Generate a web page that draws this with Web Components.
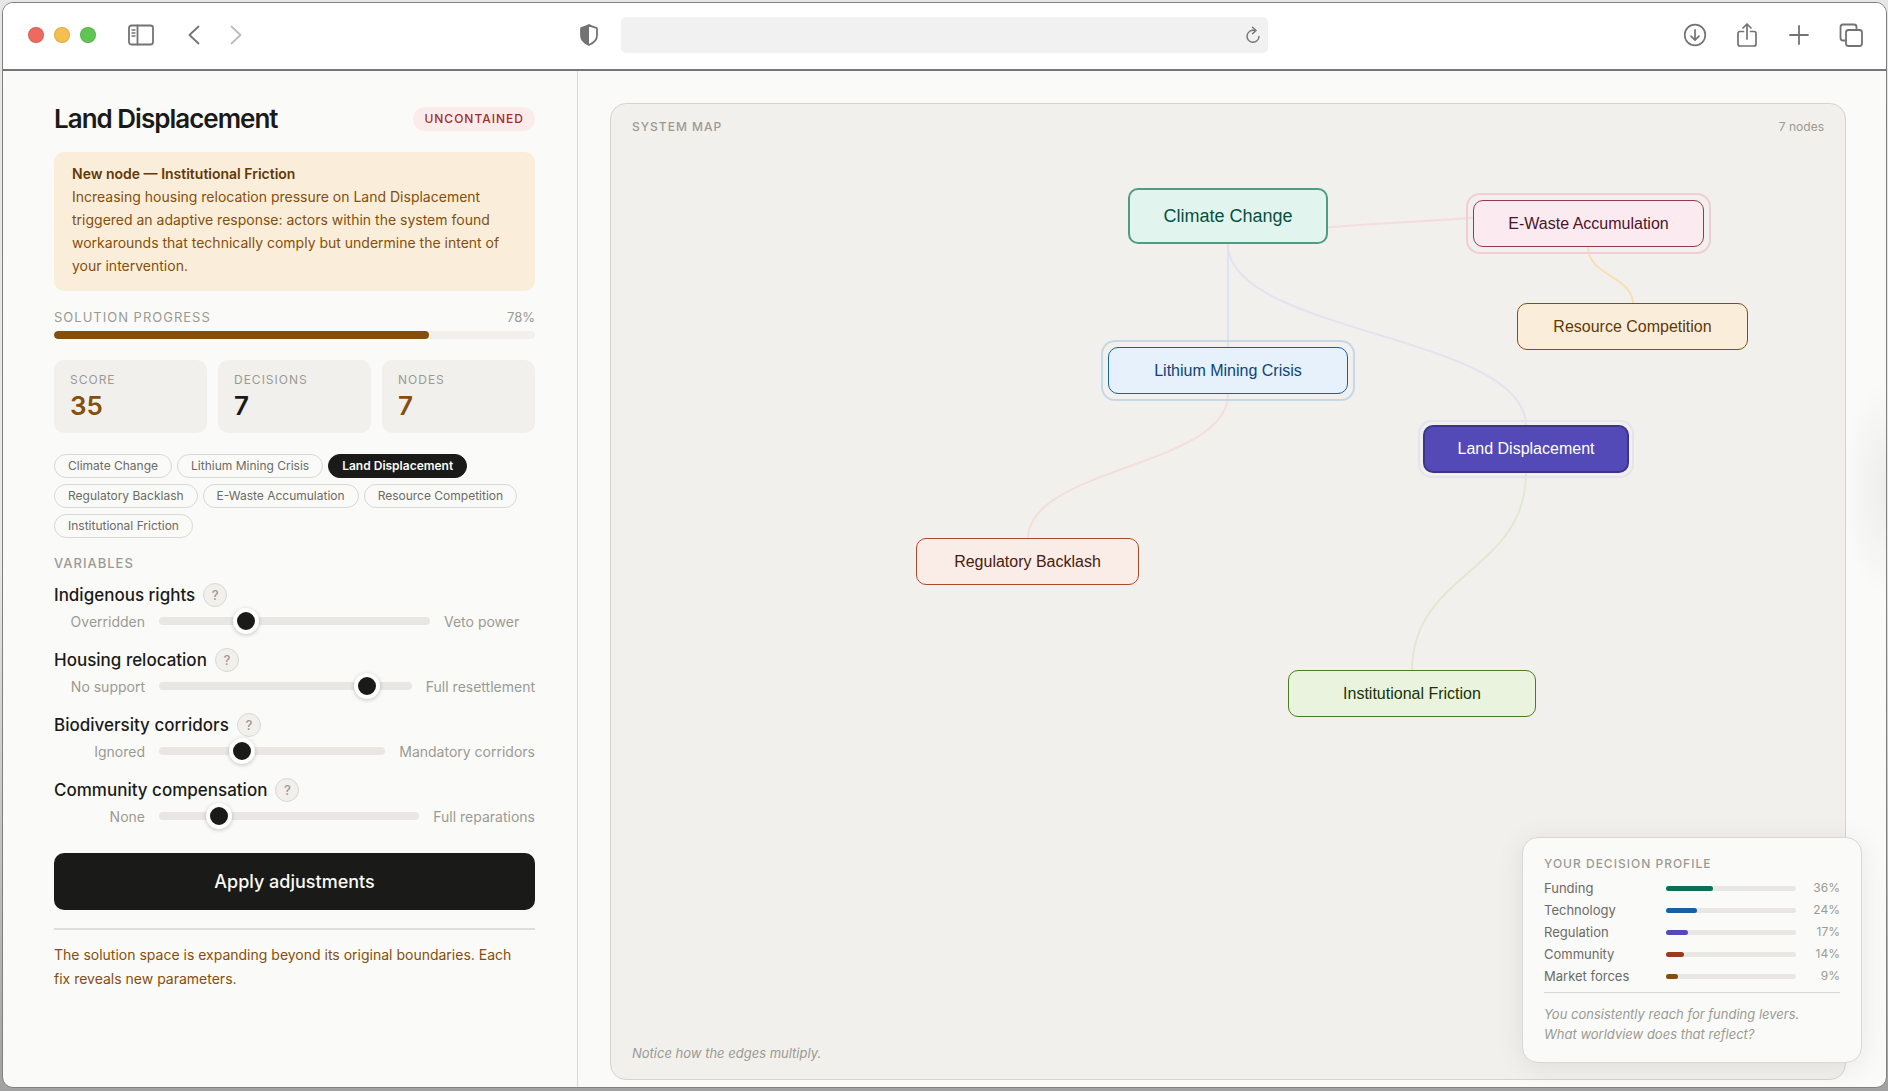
<!DOCTYPE html>
<html lang="en">
<head>
<meta charset="utf-8">
<title>Land Displacement</title>
<style>
  html, body { height: 100%; }
  body {
    margin: 0;
    background: linear-gradient(to bottom, #e6e6e6 0, #e9e9e9 50%, #a2a2a2 calc(100% - 3px), #a2a2a2 100%);
    font-family: Inter, "Liberation Sans", sans-serif;
    color: #1a1a18;
    --ink: #1a1a18;
    --muted: #9a9a94;
    --line: #d8d8d4;
    --panel: #f2f0ec;
    --paper: #fafaf8;
    --amber: #854f0b;
  }
</style>
</head>
<body>
<app-window></app-window>

<script>
const define = (name, html, setup) => {
  const tpl = document.createElement('template');
  tpl.innerHTML = html;
  customElements.define(name, class extends HTMLElement {
    connectedCallback() {
      if (this.shadowRoot) return;
      const root = this.attachShadow({ mode: 'open' });
      root.append(tpl.content.cloneNode(true));
      if (setup) setup(this, root);
    }
  });
};

define('browser-bar', `
<style>
  :host { display: grid; grid-template-columns: 1fr 647px 1fr; align-items: center; height: 64px; padding-bottom: 2px; background: #fff; border-bottom: 2px solid #77747a; flex: none; }
  .side { display: flex; align-items: center; }
  .left { padding-left: 25px; }
  .lights { display: flex; gap: 10px; margin-right: 32px; }
  .lights i { width: 16px; height: 16px; border-radius: 50%; box-sizing: border-box; border: 1px solid rgba(0,0,0,.1); }
  button { all: unset; display: flex; cursor: pointer; }
  svg { display: block; fill: none; stroke: #737373; stroke-width: 1.800; stroke-linecap: round; stroke-linejoin: round; }
  .shield { margin-left: auto; margin-right: 23px; }
  .back { margin-left: 34px; }
  .fwd { margin-left: 30px; }
  .right { justify-content: flex-end; gap: 28px; padding-right: 23px; }
  .url { position: relative; display: flex; align-items: center; }
  input { width: 100%; height: 36px; box-sizing: border-box; border: 0; border-radius: 5px; background: #f1f1f1; padding: 0 34px 0 12px; font: 14px Inter, sans-serif; }
  .reload { position: absolute; right: 7px; }
</style>
<div class="side left">
  <div class="lights"><i style="background:#ec6a5e"></i><i style="background:#f4bf4f"></i><i style="background:#61c554"></i></div>
  <button aria-label="Sidebar"><svg width="26" height="22" viewBox="0 0 26 22"><rect x="1" y="1.500" width="24" height="19" rx="2.500"/><path d="M9.500 1.500v19"/><path d="M4 6h3M4 9h3M4 12h3" stroke-width="1.300"/></svg></button>
  <button class="back" aria-label="Back"><svg width="12" height="20" viewBox="0 0 12 20"><path d="M10.500 1.500L1.500 10l9 8.500"/></svg></button>
  <button class="fwd" aria-label="Forward"><svg width="12" height="20" viewBox="0 0 12 20" style="stroke:#bcbcbc"><path d="M1.500 1.500L10.500 10l-9 8.500"/></svg></button>
  <button class="shield" aria-label="Privacy report"><svg width="18" height="22" viewBox="0 0 18 22"><path d="M9 1C7 2.500 4 3.200 1.500 3.800Q1 4 1 5v6.500C1 16 4.500 19 9 21c4.500-2 8-5 8-9.500V5q0-1-.5-1.200C14 3.200 11 2.500 9 1z"/><path d="M9 1C7 2.500 4 3.200 1.500 3.800Q1 4 1 5v6.500C1 16 4.500 19 9 21z" fill="#737373" stroke="none"/></svg></button>
</div>
<div class="url">
  <input type="text" aria-label="Address">
  <button class="reload" aria-label="Reload"><svg width="16" height="18" viewBox="0 0 16 18" style="stroke-width:1.400"><path d="M9.500 4.500A6 6 0 1 0 14 10.500"/><path d="M7.500 1.200l3.600 3.300-3.600 3.300"/></svg></button>
</div>
<div class="side right">
  <button aria-label="Downloads"><svg width="24" height="24" viewBox="0 0 24 24" style="stroke-width:1.700"><circle cx="12" cy="12" r="10.300"/><path d="M12 6.800v10M8 13.200l4 4 4-4"/></svg></button>
  <button aria-label="Share"><svg width="24" height="26" viewBox="0 0 24 26" style="stroke-width:1.700"><path d="M8.500 9.500H5q-2 0-2 2V22q0 2 2 2h14q2 0 2-2V11.500q0-2-2-2h-3.500M12 17V2.500M8 6l4-4 4 4"/></svg></button>
  <button aria-label="New tab"><svg width="24" height="24" viewBox="0 0 24 24"><path d="M12 3v18M3 12h18"/></svg></button>
  <button aria-label="Tabs"><svg width="24" height="24" viewBox="0 0 24 24"><rect x="7" y="7" width="16" height="16" rx="2.500"/><path d="M7 17.500H4q-2.500 0-2.500-2.500V4Q1.500 1.500 4 1.500h11q2.500 0 2.500 2.500v3"/></svg></button>
</div>`);

define('alert-box', `
<style>
  :host { display: block; background: #faeeda; border-radius: 10px; padding: 10px 16px 14px 18px; font-size: 14px; line-height: 23px; color: var(--amber); }
  strong { display: block; font-weight: 600; color: #633806; }
</style>
<strong><slot name="title"></slot></strong><slot></slot>`);

define('progress-line', `
<style>
  :host { display: flex; flex-direction: column; gap: 4px; }
  .row { display: flex; justify-content: space-between; font-size: 13px; line-height: 20px; color: var(--muted); }
  .row ::slotted(*) { letter-spacing: 1px; }
  .track { height: 8px; border-radius: 4px; background: var(--panel); overflow: hidden; }
  .fill { height: 100%; border-radius: 4px; background: var(--amber); }
</style>
<div class="row"><slot></slot><span class="v"></span></div>
<div class="track"><div class="fill"></div></div>`, (el, r) => {
  r.querySelector('.v').textContent = el.getAttribute('value') + '%';
  r.querySelector('.fill').style.width = el.getAttribute('value') + '%';
});

define('stat-card', `
<style>
  :host { display: block; flex: 1; background: var(--panel); border-radius: 10px; padding: 12px 16px 11px; }
  .l { font-size: 12px; line-height: 16px; letter-spacing: 1px; color: var(--muted); }
  .n { margin-top: 2px; font-size: 26px; line-height: 32px; font-weight: 600; color: var(--tone, var(--ink)); }
</style>
<div class="l"><slot></slot></div><div class="n"></div>`, (el, r) => {
  r.querySelector('.n').textContent = el.getAttribute('value');
});

define('node-chip', `
<style>
  :host { display: block; }
  button { display: block; box-sizing: border-box; height: 24px; padding: 0 13px; border: 1px solid var(--line); border-radius: 12px; background: transparent; font: 400 12px/22px Inter, sans-serif; color: #6b6b66; cursor: pointer; }
  :host([active]) button { background: var(--ink); border-color: var(--ink); color: #fafaf8; font-weight: 600; }
</style>
<button><slot></slot></button>`);

define('variable-slider', `
<style>
  :host { display: flex; flex-direction: column; }
  .head { display: flex; align-items: center; gap: 8px; height: 24px; }
  label { font-size: 17px; line-height: 24px; font-weight: 500; color: var(--ink); }
  .help { box-sizing: border-box; width: 24px; height: 24px; border: 1px solid var(--line); border-radius: 50%; background: var(--panel); color: var(--muted); font: 500 13px/20px Inter, sans-serif; padding: 0; cursor: pointer; }
  .row { display: flex; align-items: center; gap: 14px; height: 28px; font-size: 14px; color: var(--muted); white-space: nowrap; }
  .row span { min-width: 91px; flex: none; }
  .lo { text-align: right; }
  input { -webkit-appearance: none; appearance: none; flex: 1; min-width: 0; width: 0; height: 8px; margin: 0; border-radius: 4px; background: #e8e7e3; }
  input::-webkit-slider-thumb { -webkit-appearance: none; width: 26px; height: 26px; box-sizing: border-box; border-radius: 50%; background: var(--ink); border: 4px solid #fff; box-shadow: 0 1px 4px rgba(0,0,0,.22); }
</style>
<div class="head"><label for="r"></label><button class="help" aria-label="Help">?</button></div>
<div class="row"><span class="lo"></span><input id="r" type="range" min="0" max="100"><span class="hi"></span></div>`, (el, r) => {
  r.querySelector('label').textContent = el.getAttribute('label');
  r.querySelector('.lo').textContent = el.getAttribute('low');
  r.querySelector('.hi').textContent = el.getAttribute('high');
  r.querySelector('input').value = el.getAttribute('value');
});

define('control-panel', `
<style>
  :host { display: flex; flex-direction: column; width: 575px; box-sizing: border-box; padding: 32px 42px 0 51px; border-right: 1px solid var(--line); flex: none; }
  .title { display: flex; align-items: center; justify-content: space-between; height: 32px; margin-bottom: 17px; }
  h1 { margin: 0; font-size: 26px; line-height: 32px; font-weight: 600; letter-spacing: -1px; }
  .badge { background: #fcebeb; color: #a32d2d; font-size: 12px; line-height: 24px; font-weight: 500; letter-spacing: 1px; padding: 0 11px; border-radius: 12px; }
  progress-line { margin: 16px 0 21px; }
  .stats { display: flex; gap: 11px; margin-bottom: 21px; }
  .chips { display: flex; flex-wrap: wrap; gap: 6px 5px; margin-bottom: 15px; }
  h2 { margin: 0 0 10px; font-size: 13px; line-height: 20px; font-weight: 500; letter-spacing: 1px; color: var(--muted); }
  .vars { display: flex; flex-direction: column; gap: 13px; margin-bottom: 23px; }
  .apply { height: 57px; border: 0; border-radius: 10px; background: var(--ink); color: #fafaf8; font: 500 18px Inter, sans-serif; cursor: pointer; flex: none; }
  .note { margin: 18px 0 0; padding: 13px 16px 0 0; border-top: 2px solid #dededb; font-size: 14px; line-height: 24px; color: var(--amber); }
</style>
<div class="title"><h1>Land Displacement</h1><span class="badge">UNCONTAINED</span></div>
<alert-box><span slot="title">New node — Institutional Friction</span>Increasing housing relocation pressure on Land Displacement triggered an adaptive response: actors within the system found workarounds that technically comply but undermine the intent of your intervention.</alert-box>
<progress-line value="78"><span>SOLUTION PROGRESS</span></progress-line>
<div class="stats">
  <stat-card value="35" style="--tone:var(--amber)">SCORE</stat-card>
  <stat-card value="7">DECISIONS</stat-card>
  <stat-card value="7" style="--tone:var(--amber)">NODES</stat-card>
</div>
<div class="chips">
  <node-chip>Climate Change</node-chip><node-chip>Lithium Mining Crisis</node-chip><node-chip active>Land Displacement</node-chip>
  <node-chip>Regulatory Backlash</node-chip><node-chip>E-Waste Accumulation</node-chip><node-chip>Resource Competition</node-chip>
  <node-chip>Institutional Friction</node-chip>
</div>
<h2>VARIABLES</h2>
<div class="vars">
  <variable-slider label="Indigenous rights" low="Overridden" high="Veto power" value="30"></variable-slider>
  <variable-slider label="Housing relocation" low="No support" high="Full resettlement" value="86"></variable-slider>
  <variable-slider label="Biodiversity corridors" low="Ignored" high="Mandatory corridors" value="35"></variable-slider>
  <variable-slider label="Community compensation" low="None" high="Full reparations" value="20"></variable-slider>
</div>
<button class="apply">Apply adjustments</button>
<p class="note">The solution space is expanding beyond its original boundaries. Each fix reveals new parameters.</p>`);

define('map-node', `
<style>
  :host { display: block; position: absolute; left: calc(var(--x) * 1px); top: calc(var(--y) * 1px); width: calc(var(--w) * 1px); height: calc(var(--h, 47) * 1px); }
  button { width: 100%; height: 100%; box-sizing: border-box; border: var(--bw, 1px) solid var(--edge); border-radius: 10px; background: var(--fill); color: var(--text); font: var(--fs, 16px) "Liberation Sans", Arial, sans-serif; padding: 0; cursor: pointer; }
  :host([halo])::before { content: ""; position: absolute; inset: calc(var(--gap, 7px) * -1); border: 2px solid var(--halo); border-radius: 14px; pointer-events: none; }
</style>
<button><slot></slot></button>`);

define('system-map', `
<style>
  :host { display: flex; flex-direction: column; justify-content: space-between; position: relative; flex: 1; box-sizing: border-box; border: 1px solid #d3d3cf; border-radius: 16px; background: #f2f0ec; overflow: hidden; padding: 14px 21px 16px; color: var(--muted); }
  header { display: flex; justify-content: space-between; line-height: 18px; font-size: 12px; }
  h2 { margin: 0; font-size: 12px; line-height: 18px; font-weight: 500; letter-spacing: 1px; }
  p { margin: 0; font-size: 13px; line-height: 20px; font-style: italic; }
  svg { position: absolute; left: 0; top: 0; width: 100%; height: 100%; fill: none; stroke-width: 2; }
</style>
<header><h2>SYSTEM MAP</h2><span>7 nodes</span></header>
<svg aria-hidden="true">
  <path d="M617 140V243" stroke="#d9e5f0"/>
  <path d="M617 140C617 230 915 230 915 322" stroke="#e3e2f0"/>
  <path d="M617 140C617 118 977 118 977 96" stroke="#f4dce1"/>
  <path d="M617 290C617 363 417 363 417 435" stroke="#f4dfd8"/>
  <path d="M977 143C977 172 1022 172 1022 200" stroke="#f8dfb6"/>
  <path d="M915 369C915 468 801 468 801 567" stroke="#dfe9cf"/>
</svg>
<map-node style="--x:517;--y:84;--w:200;--h:56;--fs:18px;--bw:2px;--fill:#e1f5ee;--edge:#4f9c83;--text:#085041">Climate Change</map-node>
<map-node halo style="--x:862;--y:96;--w:231;--fill:#fbeaf0;--edge:#993556;--text:#4b1528;--halo:#f2ccd6">E-Waste Accumulation</map-node>
<map-node style="--x:906;--y:199;--w:231;--fill:#faeeda;--edge:#854f0b;--text:#633806">Resource Competition</map-node>
<map-node halo style="--x:497;--y:243;--w:240;--fill:#e6f1fb;--edge:#185fa5;--text:#0c447c;--halo:#c4d8ea">Lithium Mining Crisis</map-node>
<map-node halo style="--x:812;--y:321;--w:206;--h:48;--bw:2px;--gap:5px;--fill:#534ab7;--edge:#3c3489;--text:#fff;--halo:#e4e3ef">Land Displacement</map-node>
<map-node style="--x:305;--y:434;--w:223;--fill:#faece7;--edge:#ad4a2b;--text:#4a1b0c">Regulatory Backlash</map-node>
<map-node style="--x:677;--y:566;--w:248;--fill:#eaf3de;--edge:#4a7d1c;--text:#173404">Institutional Friction</map-node>
<p>Notice how the edges multiply.</p>`);

define('profile-row', `
<style>
  :host { display: flex; align-items: center; font-size: 13px; line-height: 22px; color: #6b6b66; }
  .n { width: 122px; flex: none; }
  .t { flex: 1; height: 5px; border-radius: 3px; background: #e8e7e3; }
  .f { height: 100%; border-radius: 3px; background: var(--tone); }
  .v { width: 44px; text-align: right; font-size: 12px; color: var(--muted); }
</style>
<span class="n"><slot></slot></span><div class="t"><div class="f"></div></div><span class="v"></span>`, (el, r) => {
  r.querySelector('.v').textContent = el.getAttribute('value') + '%';
  r.querySelector('.f').style.width = el.getAttribute('value') + '%';
});

define('decision-profile', `
<style>
  :host { display: block; box-sizing: border-box; width: 340px; padding: 17px 21px 18px; border: 1px solid var(--line); border-radius: 16px; background: var(--paper); box-shadow: 0 4px 28px rgba(0,0,0,.08); }
  h2 { margin: 0 0 4px; font-size: 12px; line-height: 18px; font-weight: 500; letter-spacing: 1px; color: var(--muted); }
  p { margin: 5px 0 0; padding-top: 11px; border-top: 1px solid var(--line); font-size: 13px; line-height: 20px; font-style: italic; color: var(--muted); }
</style>
<h2>YOUR DECISION PROFILE</h2>
<profile-row value="36" style="--tone:#0f6e56">Funding</profile-row>
<profile-row value="24" style="--tone:#185fa5">Technology</profile-row>
<profile-row value="17" style="--tone:#534ab7">Regulation</profile-row>
<profile-row value="14" style="--tone:#993c1d">Community</profile-row>
<profile-row value="9" style="--tone:#854f0b">Market forces</profile-row>
<p>You consistently reach for funding levers.<br>What worldview does that reflect?</p>`);

define('app-window', `
<style>
  :host { display: flex; flex-direction: column; height: 100vh; box-sizing: border-box; padding: 2px 1px 3px 2px; }
  .win { position: relative; flex: 1; min-height: 0; display: flex; flex-direction: column; border: 1px solid #808080; border-radius: 11px; background: radial-gradient(ellipse 44px 110px at 100% 485px, rgba(0,0,0,.05), rgba(0,0,0,0)) var(--paper); overflow: hidden; }
  .body { flex: 1; display: flex; min-height: 0; }
  main { flex: 1; display: flex; padding: 32px 40px 7px 32px; min-width: 0; }
  decision-profile { position: absolute; right: 24px; bottom: 24px; }
</style>
<div class="win">
  <browser-bar></browser-bar>
  <div class="body">
    <control-panel></control-panel>
    <main><system-map></system-map></main>
  </div>
  <decision-profile></decision-profile>
</div>`);
</script>
</body>
</html>
